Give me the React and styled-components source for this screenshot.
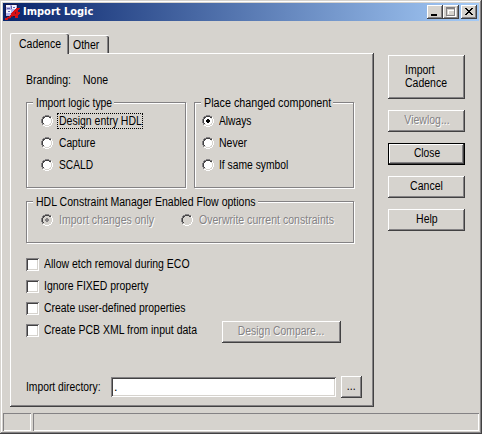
import React from "react";
import styled, { createGlobalStyle, css } from "styled-components";

const face = "#d6d3ce";
const shadow = "#848284";
const dark = "#424142";

const GlobalStyle = createGlobalStyle`
  * { box-sizing: border-box; }
  body { margin: 0; background: ${face}; overflow: hidden; }
`;

const raised = css`
  box-shadow: inset -1px -1px ${dark}, inset 1px 1px #fff, inset -2px -2px ${shadow};
`;

const sunken = css`
  box-shadow: inset 1px 1px ${shadow}, inset -1px -1px #fff, inset 2px 2px ${dark}, inset -2px -2px ${face};
`;

const Window = styled.div`
  width: 482px;
  height: 434px;
  padding: 3px;
  display: flex;
  flex-direction: column;
  background: ${face};
  color: #000;
  font: 12.5px/14px "Liberation Sans", Arial, sans-serif;
  box-shadow: inset -1px -1px ${dark}, inset 1px 1px ${face}, inset -2px -2px ${shadow}, inset 2px 2px #fff;
`;

const TitleBar = styled.header`
  height: 18px;
  flex: none;
  display: flex;
  align-items: center;
  padding: 0 2px;
  background: linear-gradient(90deg, #08246b, #a5cbf7);
`;

const Title = styled.h1`
  flex: 1;
  margin: 0 0 0 2px;
  color: #fff;
  font: bold 11px/16px "DejaVu Sans Condensed", "DejaVu Sans", Tahoma, sans-serif;
  font-stretch: condensed;
`;

const Caption = styled.button`
  width: 16px;
  height: 14px;
  padding: 0;
  border: 0;
  display: flex;
  margin-left: ${(p) => p.$gap || 0}px;
  background: ${face};
  ${raised}
`;

const Text = styled.span`
  display: inline-block;
  white-space: nowrap;
  transform: scaleX(${(p) => p.$scale || 0.84});
  transform-origin: ${(p) => (p.$center ? "50%" : "0")} 50%;
  ${(p) => p.$disabled && css`color: ${shadow}; text-shadow: 1px 1px #fff;`}
`;

const FocusRing = styled.span`
  width: 86px;
  height: 16px;
  margin: -1px 0 0 -2px;
  padding-left: 1px;
  display: block;
  line-height: 14px;
  border: 1px dotted #000;
`;

const Body = styled.main`
  height: 392px;
  flex: none;
  display: flex;
  padding: 12px 0 0 7px;
`;

const Tabs = styled.section`
  width: 364px;
  flex: none;
`;

const TabList = styled.div`
  height: 20px;
  display: flex;
  align-items: flex-end;
`;

const Tab = styled.div`
  width: ${(p) => (p.$active ? 59 : 40)}px;
  height: ${(p) => (p.$active ? 21 : 18)}px;
  margin-bottom: ${(p) => (p.$active ? -1 : 0)}px;
  padding: ${(p) => (p.$active ? "3px 0 0 8px" : "2px 0 0 4px")};
  z-index: 1;
  background: ${face};
  border-radius: 2px 2px 0 0;
  border-top: 1px solid #fff;
  border-left: ${(p) => (p.$active ? "1px solid #fff" : "0")};
  box-shadow: inset -1px 0 ${dark}, inset -2px 0 ${shadow};
`;

const Panel = styled.div`
  height: 354px;
  padding: 20px 0 0 16px;
  ${raised}
`;

const Branding = styled.div`
  display: flex;
  height: 29px;
`;

const BrandLabel = styled.div`
  width: 57px;
`;

const Groups = styled.div`
  display: flex;
  gap: 8px;
  margin-bottom: 13px;
`;

const GroupFrame = styled.section`
  width: ${(p) => p.$w}px;
  height: ${(p) => p.$h}px;
  padding-left: ${(p) => p.$inset}px;
  border: 1px solid ${shadow};
  box-shadow: 1px 1px #fff, inset 1px 1px #fff;
`;

const Legend = styled.div`
  width: ${(p) => p.$w}px;
  height: 14px;
  margin: -7px 0 0 ${(p) => 6 - p.$inset}px;
  padding-left: 3px;
  background: ${face};
  white-space: nowrap;
`;

const Options = styled.div`
  display: flex;
  flex-direction: ${(p) => (p.$row ? "row" : "column")};
`;

const OptionRow = styled.label`
  height: 22px;
  flex: none;
  width: ${(p) => (p.$w ? p.$w + "px" : "auto")};
  display: flex;
  align-items: center;
  gap: ${(p) => p.$gap}px;
  svg { flex: none; }
`;

const CheckArea = styled.div`
  display: flex;
  height: 133px;
  padding-top: 10px;
`;

const Checks = styled.div`
  width: 196px;
`;

const CheckBox = styled.span`
  width: 13px;
  height: 13px;
  flex: none;
  background: #fff;
  ${sunken}
`;

const Button = styled.button`
  width: ${(p) => p.$w || 77}px;
  height: ${(p) => p.$h || 22}px;
  margin: ${(p) => p.$m || 0};
  padding: 0 0 1px;
  flex: none;
  border: 0;
  background: ${face};
  font: inherit;
  line-height: 13px;
  color: #000;
  text-align: left;
  display: flex;
  align-items: center;
  justify-content: center;
  ${raised}
  ${(p) => p.$default && css`
    box-shadow: inset 0 0 0 1px #000, inset -2px -2px ${dark}, inset 2px 2px #fff, inset -3px -3px ${shadow};
  `}
`;

const Directory = styled.div`
  display: flex;
  align-items: center;
  height: 22px;
`;

const DirLabel = styled.label`
  width: 85px;
`;

const Input = styled.input`
  width: 225px;
  height: 20px;
  padding: 0 0 0 3px;
  border: 0;
  border-radius: 0;
  background: #fff;
  font: inherit;
  outline: 0;
  ${sunken}
`;

const Actions = styled.aside`
  padding: 22px 0 0 14px;
  display: flex;
  flex-direction: column;
  gap: 11px;
`;

const StatusBar = styled.footer`
  display: flex;
  gap: 2px;
  height: 18px;
`;

const Pane = styled.div`
  flex: ${(p) => (p.$w ? `0 0 ${p.$w}px` : "1")};
  box-shadow: inset 1px 1px ${shadow}, inset -1px -1px #fff;
`;

const AppIcon = () => (
  <svg width="16" height="16" shapeRendering="crispEdges">
    <path fill="#181848" d="M0 0h13v13H0z" />
    <path fill="#b4b4ec" d="M1 1h11v11H1z" />
    <path fill="#f4f4ff" d="M1 1h4v2H1zM7 1h4v4H7zM1 6h5v3H1z" />
    <path fill="#6464b0" d="M2 4h3v1H2zM6 2h1v3H6zM8 3h2v1H8zM3 7h2v1H3z" />
    <path fill="#d81014" d="M11 4h4v1h-1v1h-1v2h2v2h-1v1h-1v3h-3v-2H8v1H6v1H5v1H3v1H0v-2h2v-1h2v-1h1v-1h1V9h1V8h1V7h1V6h1V5h1z" />
    <path fill="#7c1024" d="M10 8h1v2h-1zM3 14h2v1H3zM6 12h2v1H6z" />
  </svg>
);

const Radio = ({ checked, disabled }) => (
  <svg width="12" height="12" shapeRendering="crispEdges">
    <path fill={disabled ? face : "#fff"} d="M4 2h4v1h2v6H8v1H4V9H2V3h2z" />
    <path fill={shadow} d="M4 0h4v1H4zM2 1h2v1H2zM8 1h2v1H8zM1 2h1v2H1zM0 4h1v4H0zM1 8h1v2H1z" />
    <path fill={dark} d="M4 1h4v1H4zM2 2h2v1H2zM8 2h2v1H8zM2 3h1v1H2zM1 4h1v4H1zM2 8h1v1H2z" />
    <path fill={face} d="M9 3h1v1H9zM10 4h1v4h-1zM9 8h1v1H9zM2 9h2v1H2zM8 9h2v1H8zM4 10h4v1H4z" />
    <path fill="#fff" d="M10 2h1v2h-1zM11 4h1v4h-1zM10 8h1v2h-1zM8 10h2v1H8zM4 11h4v1H4zM2 10h2v1H2z" />
    {checked && <path fill={disabled ? shadow : "#000"} d="M5 4h2v1h1v2H7v1H5V7H4V5h1z" />}
  </svg>
);

const GroupBox = ({ title, w, h, inset = 14, legendW, scale, children }) => (
  <GroupFrame $w={w} $h={h} $inset={inset}>
    <Legend $w={legendW} $inset={inset}><Text $scale={scale}>{title}</Text></Legend>
    {children}
  </GroupFrame>
);

const Option = ({ label, gap = 6, w, scale, checked, disabled, focus }) => (
  <OptionRow $gap={gap} $w={w}>
    <Radio checked={checked} disabled={disabled} />
    {focus ? (
      <FocusRing><Text $scale={scale}>{label}</Text></FocusRing>
    ) : (
      <Text $scale={scale} $disabled={disabled}>{label}</Text>
    )}
  </OptionRow>
);

const checks = [
  ["Allow etch removal during ECO", 0.838],
  ["Ignore FIXED property", 0.836],
  ["Create user-defined properties", 0.834],
  ["Create PCB XML from input data", 0.84],
];

export default function App() {
  return (
    <>
      <GlobalStyle />
      <Window>
        <TitleBar>
          <AppIcon />
          <Title>Import Logic</Title>
          <Caption aria-label="Minimize">
            <svg width="16" height="14" shapeRendering="crispEdges"><path d="M4 9h6v2H4z" /></svg>
          </Caption>
          <Caption aria-label="Maximize">
            <svg width="16" height="14" shapeRendering="crispEdges">
              <path fill="#fff" d="M12 3h1v9H4v-1h8zM5 9V5h6v1H6v3z" />
              <path fill={shadow} fillRule="evenodd" d="M3 2h9v9H3zM4 4v6h7V4z" />
            </svg>
          </Caption>
          <Caption aria-label="Close window" $gap={2}>
            <svg width="16" height="14" shapeRendering="crispEdges">
              <path d="M4 3h2v1h1v1h2V4h1V3h2v1h-1v1h-1v1H9v1h1v1h1v1h1v1h-2V9H9V8H7v1H6v1H4V9h1V8h1V7h1V6H6V5H5V4H4z" />
            </svg>
          </Caption>
        </TitleBar>
        <Body>
          <Tabs>
            <TabList>
              <Tab $active><Text>Cadence</Text></Tab>
              <Tab><Text>Other</Text></Tab>
            </TabList>
            <Panel>
              <Branding>
                <BrandLabel><Text>Branding:</Text></BrandLabel>
                <Text>None</Text>
              </Branding>
              <Groups>
                <GroupBox title="Import logic type" w={160} h={86} legendW={81} scale={0.83}>
                  <Options>
                    <Option label="Design entry HDL" focus />
                    <Option label="Capture" scale={0.82} />
                    <Option label="SCALD" scale={0.82} />
                  </Options>
                </GroupBox>
                <GroupBox title="Place changed component" w={160} h={86} inset={7} legendW={132} scale={0.86}>
                  <Options>
                    <Option label="Always" gap={5} scale={0.82} checked />
                    <Option label="Never" gap={5} />
                    <Option label="If same symbol" gap={5} scale={0.825} />
                  </Options>
                </GroupBox>
              </Groups>
              <GroupBox title="HDL Constraint Manager Enabled Flow options" w={328} h={42} legendW={225} scale={0.842}>
                <Options $row>
                  <Option label="Import changes only" w={140} scale={0.845} checked disabled />
                  <Option label="Overwrite current constraints" scale={0.845} disabled />
                </Options>
              </GroupBox>
              <CheckArea>
                <Checks>
                  {checks.map(([label, scale]) => (
                    <OptionRow key={label} $gap={5}>
                      <CheckBox />
                      <Text $scale={scale}>{label}</Text>
                    </OptionRow>
                  ))}
                </Checks>
                <Button $w={119} $m="68px 0 0"><Text $center $disabled $scale={0.83}>Design Compare...</Text></Button>
              </CheckArea>
              <Directory>
                <DirLabel><Text $scale={0.825}>Import directory:</Text></DirLabel>
                <Input defaultValue="." />
                <Button $w={21} $m="0 0 0 5px"><Text $center>...</Text></Button>
              </Directory>
            </Panel>
          </Tabs>
          <Actions>
            <Button $h={44}><Text $center>Import<br />Cadence</Text></Button>
            <Button><Text $center $disabled>Viewlog...</Text></Button>
            <Button $default><Text $center $scale={0.82}>Close</Text></Button>
            <Button><Text $center>Cancel</Text></Button>
            <Button><Text $center>Help</Text></Button>
          </Actions>
        </Body>
        <StatusBar>
          <Pane $w={28} />
          <Pane />
        </StatusBar>
      </Window>
    </>
  );
}
